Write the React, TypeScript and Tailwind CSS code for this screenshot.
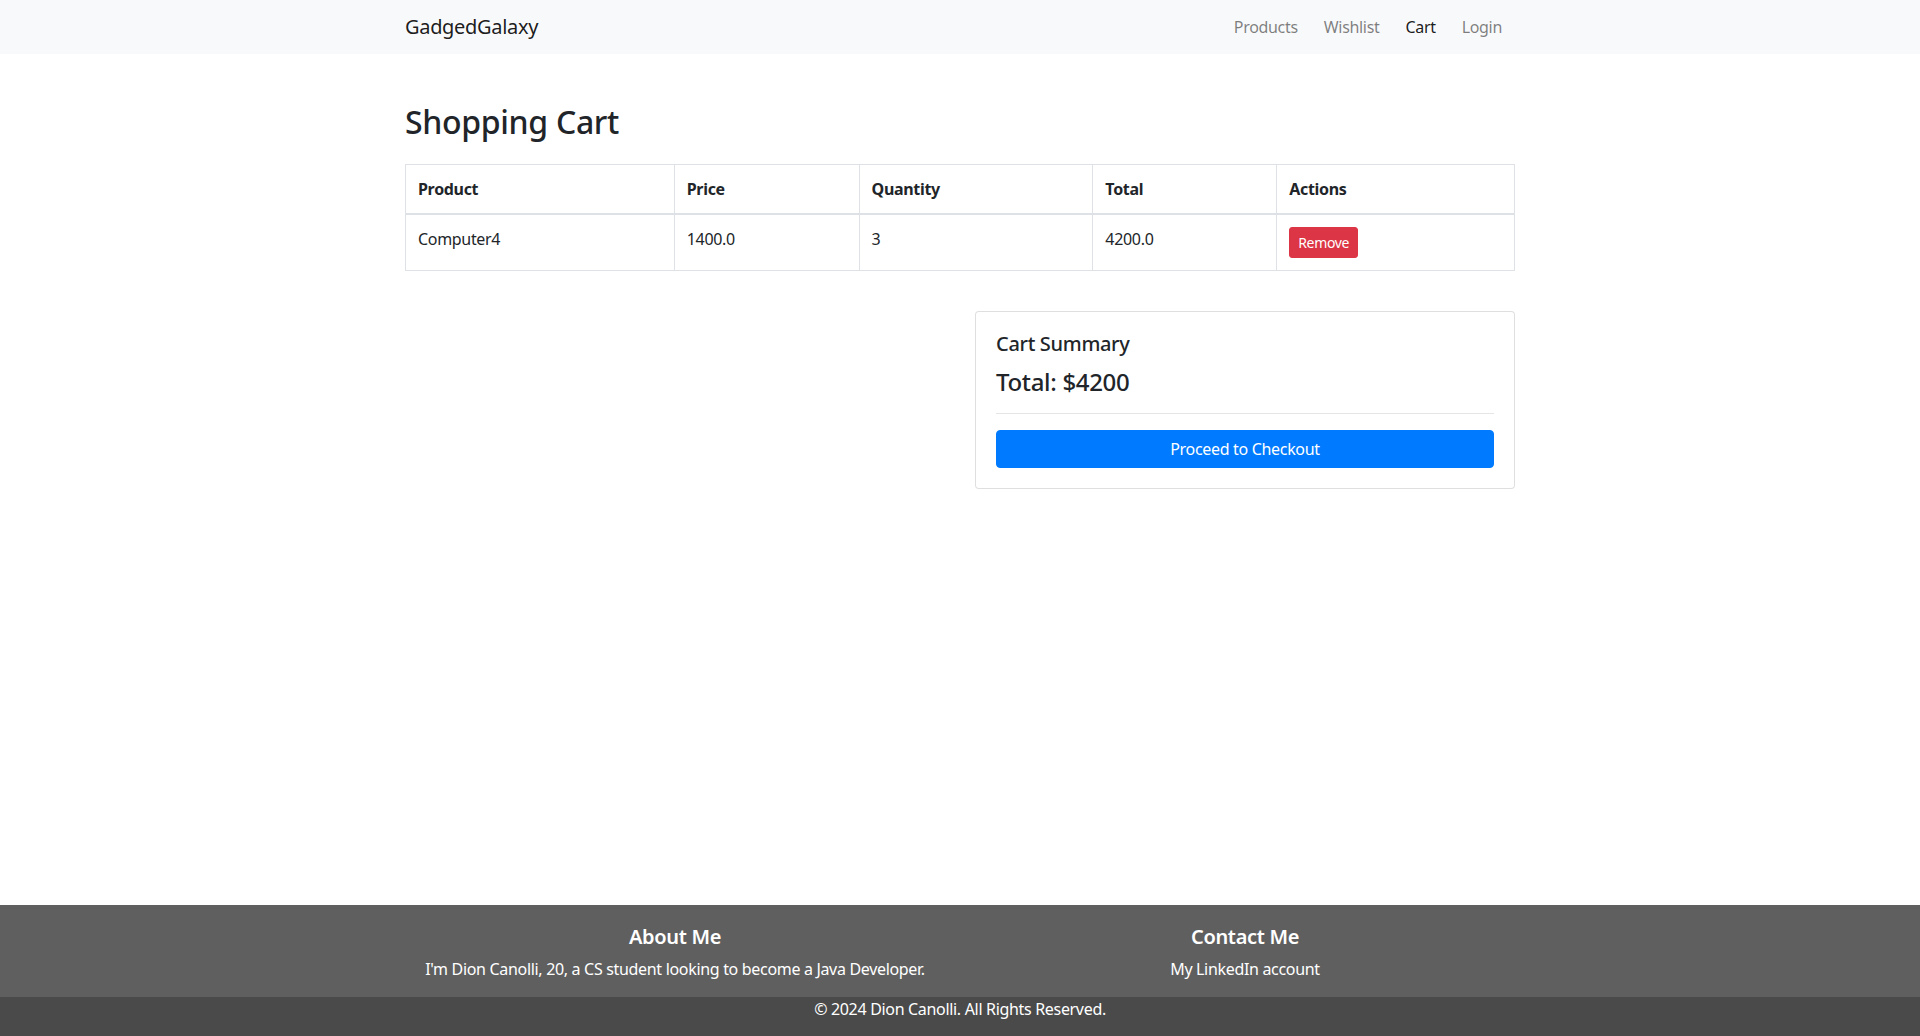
import React from 'react';

type CartItem = {
  name: string;
  price: string;
  quantity: number;
  total: string;
};

const items: CartItem[] = [
  { name: 'Computer4', price: '1400.0', quantity: 3, total: '4200.0' },
];

const navLinks = [
  { label: 'Products', active: false },
  { label: 'Wishlist', active: false },
  { label: 'Cart', active: true },
  { label: 'Login', active: false },
];

const Navbar = () => (
  <nav className="bg-[#f8f9fa] h-[54px]">
    <div className="w-[1110px] mx-auto h-full flex items-center justify-between">
      <a href="#" className="text-[20px] leading-[30px] text-[rgba(0,0,0,0.9)]">
        GadgedGalaxy
      </a>
      <ul className="flex items-center">
        {navLinks.map((link) => (
          <li key={link.label}>
            <a
              href="#"
              className={
                link.active
                  ? 'block px-[13px] py-2 text-base leading-6 text-[rgba(0,0,0,0.9)]'
                  : 'block px-[13px] py-2 text-base leading-6 text-[rgba(0,0,0,0.5)]'
              }
            >
              {link.label}
            </a>
          </li>
        ))}
      </ul>
    </div>
  </nav>
);

const CartTable = () => (
  <table className="w-full border-collapse border border-[#dee2e6] text-[#212529]">
    <thead>
      <tr>
        <th className="w-[269px] text-left align-bottom font-bold p-3 leading-6 border border-[#dee2e6] border-b-2">Product</th>
        <th className="w-[185px] text-left align-bottom font-bold p-3 leading-6 border border-[#dee2e6] border-b-2">Price</th>
        <th className="w-[234px] text-left align-bottom font-bold p-3 leading-6 border border-[#dee2e6] border-b-2">Quantity</th>
        <th className="w-[184px] text-left align-bottom font-bold p-3 leading-6 border border-[#dee2e6] border-b-2">Total</th>
        <th className="w-[238px] text-left align-bottom font-bold p-3 leading-6 border border-[#dee2e6] border-b-2">Actions</th>
      </tr>
    </thead>
    <tbody>
      {items.map((item) => (
        <tr key={item.name}>
          <td className="align-top p-3 leading-6 border border-[#dee2e6]">{item.name}</td>
          <td className="align-top p-3 leading-6 border border-[#dee2e6]">{item.price}</td>
          <td className="align-top p-3 leading-6 border border-[#dee2e6]">{item.quantity}</td>
          <td className="align-top p-3 leading-6 border border-[#dee2e6]">{item.total}</td>
          <td className="align-top p-3 leading-6 border border-[#dee2e6]">
            <button
              type="button"
              className="bg-[#dc3545] border border-[#dc3545] text-white text-sm leading-[21px] px-2 py-1 rounded-[3px]"
            >
              Remove
            </button>
          </td>
        </tr>
      ))}
    </tbody>
  </table>
);

const CartSummary = () => (
  <div className="w-[540px] ml-auto border border-[rgba(0,0,0,0.125)] rounded-[4px] bg-white">
    <div className="p-5">
      <h5 className="text-[20px] leading-6 font-medium mb-3">Cart Summary</h5>
      <h4 className="text-[24px] leading-[28.8px] font-medium mb-2">Total: $4200</h4>
      <hr className="my-4 border-0 border-t border-[rgba(0,0,0,0.1)]" />
      <button
        type="button"
        className="w-full bg-[#007bff] border border-[#007bff] text-white text-base leading-6 py-[6px] rounded-[4px]"
      >
        Proceed to Checkout
      </button>
    </div>
  </div>
);

const Footer = () => (
  <footer className="text-white">
    <div className="bg-[#5f5f5f] pt-5">
      <div className="w-[1110px] mx-auto grid grid-cols-2 gap-[30px] text-center">
        <div>
          <h5 className="text-[20px] leading-6 font-semibold mb-2">About Me</h5>
          <p className="leading-6 mb-4">I'm Dion Canolli, 20, a CS student looking to become a Java Developer.</p>
        </div>
        <div>
          <h5 className="text-[20px] leading-6 font-semibold mb-2">Contact Me</h5>
          <p className="leading-6 mb-4">
            <a href="#" className="text-white">My LinkedIn account</a>
          </p>
        </div>
      </div>
    </div>
    <div className="bg-[#4a4a4a] h-[39px] text-center leading-6">
      © 2024 Dion Canolli. All Rights Reserved.
    </div>
  </footer>
);

export default function App() {
  return (
    <div className="min-h-screen flex flex-col bg-white text-[#212529] font-['Noto_Sans',sans-serif] tracking-[-0.02em] text-base">
      <Navbar />
      <main className="flex-1">
        <div className="w-[1110px] mx-auto mt-[49px]">
          <h2 className="text-[32px] leading-[38.4px] font-medium mb-[23px]">Shopping Cart</h2>
          <CartTable />
          <div className="mt-[40px]">
            <CartSummary />
          </div>
        </div>
      </main>
      <Footer />
    </div>
  );
}
